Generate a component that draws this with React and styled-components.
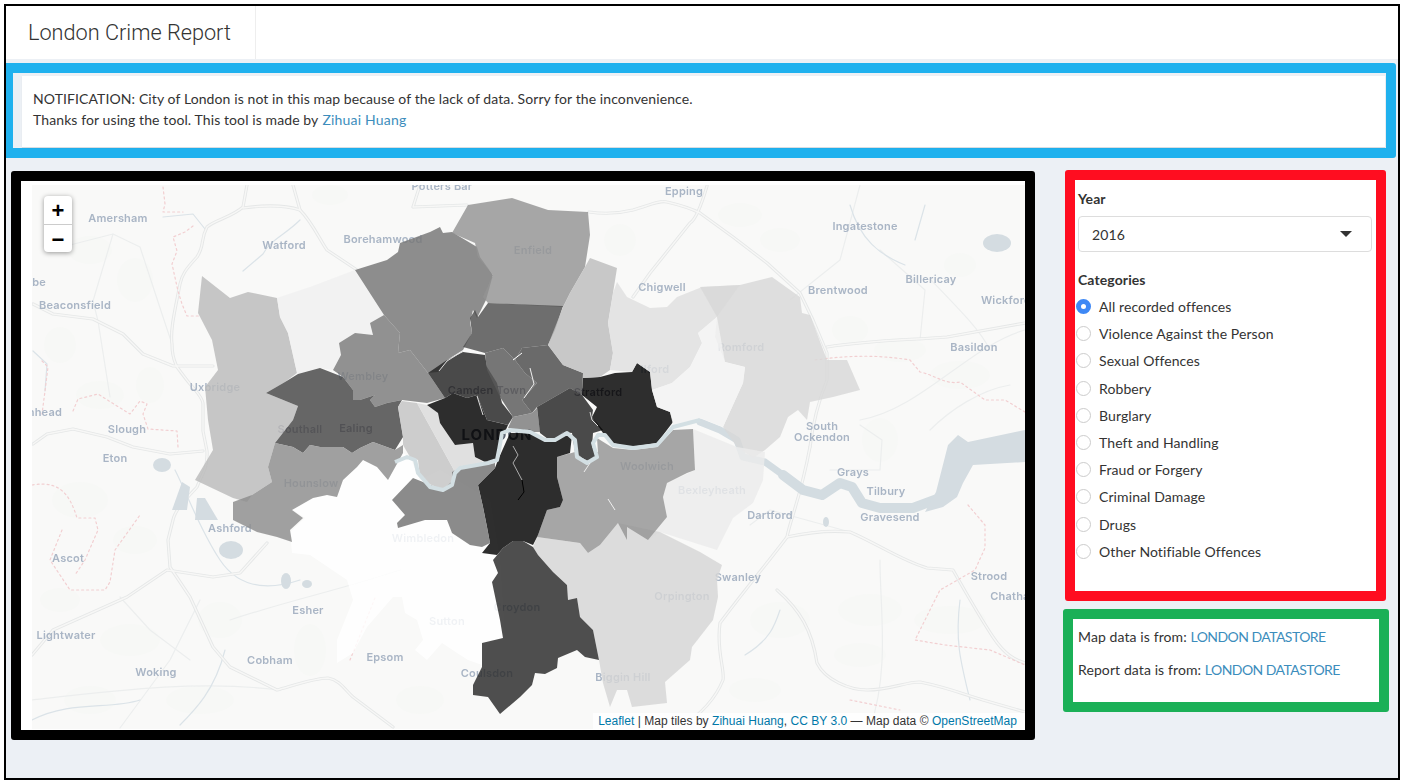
import styled, { createGlobalStyle } from "styled-components";

const GlobalStyle = createGlobalStyle`
  html, body {
    margin: 0;
    background: #fff;
  }
  * {
    box-sizing: border-box;
  }
  a {
    color: #3c8dbc;
    text-decoration: none;
  }
`;

const Frame = styled.div`
  margin: 4px;
  height: 776px;
  border: 2px solid #000;
  background: #ecf0f5;
  font-family: "Lato", "Noto Sans", sans-serif;
  font-size: 14px;
  letter-spacing: 0.1px;
  color: #333;
  overflow: hidden;
`;

const Header = styled.header`
  height: 53px;
  background: #fff;
  display: flex;
`;

const Title = styled.div`
  width: 250px;
  padding-left: 22px;
  border-right: 1px solid #eee;
  font-family: "Roboto", "Liberation Sans", sans-serif;
  font-weight: 300;
  font-size: 21.7px;
  letter-spacing: 0;
  line-height: 54px;
`;

const Highlight = styled.section`
  border: 10px solid ${(p) => p.$color};
  border-radius: 3px;
`;

const NoticeBox = styled(Highlight)`
  width: 1393px;
  height: 95px;
  margin: 4px 0 0 -3px;
  padding: 3px 1px 1px 9px;
`;

const NoticeBody = styled.div`
  height: 100%;
  background: #fff;
  padding: 12px 11px;
  line-height: 21px;
  box-shadow: 0 1px 1px rgba(0, 0, 0, 0.08);
`;

const NoticeLink = styled.a`
  letter-spacing: 0.2px;
  margin-left: 4px;
`;

const Content = styled.div`
  display: flex;
  margin: 13px 0 0 5px;
  align-items: flex-start;
`;

const MapCard = styled(Highlight)`
  width: 1024px;
  height: 569px;
  padding: 4px 0 0 11px;
  background: #fff;
`;

const MapPane = styled.div`
  position: relative;
  width: 993px;
  height: 544px;
  overflow: hidden;
  background: #f9f9f8;
`;

const MapSvg = styled.svg`
  display: block;
  filter: blur(0.35px);
`;

const ZoomControl = styled.div`
  position: absolute;
  top: 11px;
  left: 12px;
  width: 28px;
  background: #fff;
  border-radius: 4px;
  box-shadow: 0 1px 5px rgba(0, 0, 0, 0.4);
`;

const ZoomButton = styled.div`
  height: 28px;
  padding-top: 2px;
  display: flex;
  align-items: center;
  justify-content: center;
  font-family: "Liberation Sans", sans-serif;
  font-size: 22px;
  font-weight: 700;
  color: #000;
  & + & {
    border-top: 1px solid #ccc;
  }
`;

const Attribution = styled.div`
  position: absolute;
  right: 0;
  bottom: 0;
  height: 16px;
  padding: 0 8px 0 5px;
  background: rgba(255, 255, 255, 0.85);
  font-family: "Liberation Sans", sans-serif;
  font-size: 12px;
  letter-spacing: 0.03px;
  line-height: 16px;
  white-space: nowrap;
  a {
    color: #0078a8;
  }
`;

const Side = styled.aside`
  margin: -1px 0 0 30px;
  width: 321px;
`;

const ControlsBox = styled(Highlight)`
  height: 431px;
  background: #fff;
  padding: 9px 3px;
`;

const FieldLabel = styled.div`
  font-weight: 700;
  font-size: 14px;
  line-height: 20px;
  margin-bottom: 7px;
`;

const Select = styled.div`
  width: 294px;
  height: 36px;
  display: flex;
  align-items: center;
  justify-content: space-between;
  padding: 0 19px 0 13px;
  margin-bottom: 18px;
  border: 1.5px solid #ddd;
  border-radius: 4px;
  &::after {
    content: "";
    border-left: 6px solid transparent;
    border-right: 6px solid transparent;
    border-top: 6px solid #333;
  }
`;

const RadioList = styled.div`
  display: flex;
  flex-direction: column;
  margin-top: -4px;
`;

const RadioRow = styled.div`
  height: 27.2px;
  display: flex;
  align-items: center;
  gap: 8px;
`;

const RadioDot = styled.span`
  width: 15px;
  height: 15px;
  margin-left: -2px;
  border-radius: 50%;
  border: ${(p) => (p.$on ? "5px solid #3e88f5" : "1px solid #ccc")};
  background: #fff;
`;

const SourcesBox = styled(Highlight)`
  height: 103px;
  width: 326px;
  margin: 8px 0 0 -2px;
  background: #fff;
  padding: 8px 5px;
`;

const SourceLine = styled.p`
  margin: 0 0 13px;
  line-height: 20px;
`;

const SourceLink = styled.a`
  letter-spacing: -0.55px;
`;

const TileLabel = styled.text`
  font-family: "Inter", "Liberation Sans", sans-serif;
  font-size: ${(p) => p.$size || 11}px;
  font-weight: ${(p) => p.$weight || 600};
  fill: ${(p) => p.$color || "#a9b5c5"};
  text-anchor: ${(p) => p.$anchor || "middle"};
  letter-spacing: ${(p) => p.$spacing || 0.2}px;
`;

const categories = [
  "All recorded offences",
  "Violence Against the Person",
  "Sexual Offences",
  "Robbery",
  "Burglary",
  "Theft and Handling",
  "Fraud or Forgery",
  "Criminal Damage",
  "Drugs",
  "Other Notifiable Offences",
];

// the overlay lets the tiles show through, so work back from the grey seen on screen
const overlayOpacity = 0.82;
const shade = (grey) => {
  const v = Math.max(0, Math.min(255, Math.round((grey - 45) / overlayOpacity)));
  return `rgb(${v},${v},${v})`;
};

const boroughs = [
  { grey: 255, points: "290,508 305,518 290,532 292,553 310,555 347,580 353,600 337,640 337,663 353,653 367,627 393,597 402,597 405,613 417,620 423,640 415,650 427,660 442,643 457,653 468,660 482,665 490,640 505,640 500,560 490,500 440,470 420,480 410,457 403,453 388,480 377,467 363,460 357,467 343,480 337,497 327,495 313,498" },
  { grey: 198, points: "202,276 230,298 248,292 277,298 280,317 288,333 297,373 285,382 266,393 298,406 293,420 275,443 268,467 272,482 252,495 247,502 233,498 195,480 213,450 208,420 205,387 218,370 212,340 198,313" },
  { grey: 242, points: "277,298 310,287 355,270 384,315 370,323 373,335 355,333 339,343 341,355 333,370 320,368 300,375 297,373 288,333 280,317" },
  { grey: 141, points: "355,270 387,260 398,252 400,243 430,232 440,227 443,233 452,232 477,247 480,257 493,275 486,300 477,318 473,310 470,322 472,333 463,350 447,360 438,372 428,373 410,350 398,353 400,333 384,315" },
  { grey: 145, points: "339,343 355,333 373,335 370,323 384,315 400,333 398,353 410,350 428,373 445,398 427,403 402,400 387,403 375,407 370,400 375,395 360,400 353,400 353,390 343,377 333,370 341,355" },
  { grey: 102, points: "266,393 285,382 298,374 320,368 343,377 353,390 353,400 360,400 375,395 370,400 375,407 387,403 402,400 398,407 403,437 395,450 373,442 360,448 352,453 343,447 320,447 310,445 303,453 293,447 275,443 293,420 298,406" },
  { grey: 160, points: "275,443 293,447 303,453 310,445 320,447 343,447 352,453 360,448 373,442 395,450 403,445 403,453 388,480 377,467 363,460 357,467 343,480 337,497 327,495 313,498 292,510 303,518 290,530 292,542 277,537 257,532 233,520 233,502 252,495 272,482 268,467" },
  { grey: 205, points: "398,407 402,401 417,403 455,472 453,480 443,490 427,483 420,477 418,460 410,457 403,445 403,437" },
  { grey: 224, points: "417,403 427,405 438,413 440,423 455,445 473,443 475,457 485,463 455,472" },
  { grey: 42, points: "427,405 445,398 453,393 467,398 477,395 487,420 508,425 500,443 497,460 487,463 475,457 473,443 455,445 440,423 438,413" },
  { grey: 74, points: "428,373 447,360 463,352 485,355 487,367 497,383 502,403 513,417 508,425 500,423 487,420 477,395 467,398 453,393 445,398" },
  { grey: 166, points: "452,233 468,205 512,198 548,210 588,212 590,235 585,267 570,293 563,307 488,303 483,297 493,275 478,257 475,243" },
  { grey: 110, points: "488,303 563,306 555,330 548,345 522,348 515,360 503,348 485,353 463,347 472,333 470,318 475,310 478,317" },
  { grey: 118, points: "485,353 503,348 515,360 525,373 537,383 522,400 532,413 513,417 500,397 487,370" },
  { grey: 106, points: "515,360 522,348 548,345 563,365 583,373 582,395 570,388 537,407 532,413 522,400 537,383 525,373" },
  { grey: 146, points: "513,417 532,413 537,408 540,432 523,432 508,428" },
  { grey: 74, points: "537,407 570,388 582,395 593,410 592,417 603,430 593,433 592,447 598,453 590,462 582,458 575,452 572,433 563,432 552,442 540,433" },
  { grey: 46, points: "583,378 600,377 615,373 632,372 637,363 650,372 652,390 657,407 670,412 673,422 657,443 630,447 613,443 603,433 592,417 597,407 582,395" },
  { grey: 200, points: "590,258 617,268 613,293 608,323 613,353 610,370 600,377 583,378 583,373 563,365 548,345 563,307 570,293 585,267" },
  { grey: 228, points: "617,282 627,297 650,308 667,307 677,297 702,287 740,285 717,317 698,333 702,343 690,367 672,383 652,390 650,372 637,363 632,372 610,370 613,353 608,323 613,293" },
  { grey: 222, points: "700,287 740,285 772,277 800,297 802,313 810,315 827,360 847,360 860,390 833,397 810,402 807,420 798,410 788,417 780,437 765,450 753,458 737,447 723,427 743,383 745,367 725,362 715,337 717,317" },
  { grey: 244, points: "717,317 725,362 745,367 743,383 723,427 700,418 673,425 670,412 657,407 652,390 672,383 690,367 702,343 698,333" },
  { grey: 238, points: "693,429 737,447 765,452 763,480 753,503 733,518 727,530 717,550 660,532 648,540 667,517 663,497 667,483 695,470" },
  { grey: 220, points: "533,547 537,537 580,543 588,553 600,545 618,523 660,532 700,552 722,565 717,580 718,597 713,620 692,647 690,660 665,682 667,703 632,707 627,690 617,690 610,707 603,683 599,660 593,630 580,617 577,598 568,600 567,585 553,572 538,555" },
  { grey: 166, points: "597,438 613,448 633,450 657,447 673,430 693,429 695,470 687,473 667,483 663,497 667,517 648,540 627,527 627,540 618,523 600,545 588,553 580,543 537,537 538,535 547,510 560,507 563,500 557,477 557,457 575,452 582,458 590,462 598,453" },
  { grey: 44, points: "510,433 532,433 540,438 552,442 563,432 572,435 570,453 557,457 557,477 563,500 560,507 547,510 538,535 533,545 523,541 513,541 503,548 497,555 482,553 490,543 487,527 483,507 478,485 495,468 498,460" },
  { grey: 138, points: "452,472 460,468 495,463 495,468 478,485 483,507 487,527 490,543 482,547 470,545 452,533 447,520 425,520 398,528 397,523 405,515 392,500 413,478 443,490 453,480" },
  { grey: 78, points: "513,541 523,541 533,547 538,555 553,572 567,585 568,600 577,598 580,617 593,630 599,660 585,657 577,650 558,658 557,668 545,674 535,673 532,685 520,697 500,714 488,697 473,695 473,685 482,667 482,643 503,638 500,620 492,582 498,573 493,560 503,548" },
];

const roads = [
  "M247 185 L243 207 C232 217 215 220 207 227 C200 240 205 245 197 257 C185 270 182 275 180 284 C175 310 170 330 172 344 C172 358 175 362 177 367 C183 375 185 378 190 384 C200 395 203 400 203 404 L203 431 L207 451 C208 470 200 478 197 487 C185 500 175 510 173 520 L168 540 L170 567 L190 597 L213 647 L230 667 L277 690 C295 685 315 678 328 678 C340 680 345 690 353 697 L393 727",
  "M243 208 C265 205 285 205 300 210 C312 222 320 240 327 250 L357 270",
  "M293 185 L300 210",
  "M413 207 L467 205 M420 185 L413 207",
  "M589 212 C610 215 625 212 633 210 C650 205 660 200 667 202 C680 205 690 208 700 213 L733 237 L767 263 L800 293 L813 320 L827 353 L827 380 C815 410 812 430 810 447",
  "M810 447 C800 500 790 520 787 537 C770 560 750 583 720 623 C716 650 725 670 723 680 C715 700 700 715 680 728",
  "M33 304 L53 314 L93 319 L123 334 L143 354 L173 366 L213 366",
  "M33 444 L47 434 L73 429 L107 437 L133 447 L170 454 L203 451",
  "M32 655 L53 630 L127 597 L167 570 L213 577 L240 573 L267 543",
  "M787 537 C810 532 830 530 850 532 C880 545 900 560 927 568 L953 570 C970 600 985 625 993 637 C1005 655 1015 660 1025 663",
  "M777 590 C800 610 812 630 817 663 C825 680 850 690 867 690 C890 690 905 682 920 682 C950 688 965 695 983 700 L1025 712",
  "M827 347 C870 340 910 340 947 337 L1025 323",
  "M707 186 C700 210 695 220 690 223 L650 273 L633 297",
];

const minorRoads = [
  "M113 234 L93 301 L98 321 L110 397",
  "M70 245 L113 234 L140 247 L163 317 L172 344",
  "M230 620 C290 600 340 590 400 570",
  "M860 185 L840 260 L790 300",
  "M930 279 C960 310 980 330 990 350",
  "M32 700 C120 690 200 680 280 690",
  "M860 420 C920 410 970 345 1025 330",
  "M200 600 L170 660 L120 728",
  "M870 728 C890 670 880 610 880 560",
  "M930 430 C950 410 980 390 1010 385",
  "M750 525 L770 510 L850 532",
  "M120 597 L150 630 L190 660",
  "M830 470 L880 470 L882 440 L860 425",
  "M920 340 L925 290 L880 250",
];

const streams = [
  "M850 205 C860 240 880 255 905 265",
  "M915 240 L925 205",
  "M163 217 L193 214 L205 229",
  "M243 271 L263 254 C270 240 285 235 300 220",
  "M33 351 L47 364 L45 391",
  "M32 720 C70 700 110 710 140 700",
  "M175 470 C190 500 200 530 220 560 C240 590 270 590 300 580",
  "M960 600 C955 640 960 660 970 700",
  "M780 610 C775 625 770 640 745 655",
  "M225 650 C215 690 195 710 180 725",
];

const boundaries = [
  "M163 187 L165 204 L163 212 L183 212 M193 226 L185 232 L173 237 L177 251 L172 264 L178 291 L182 304 L187 316 L200 316",
  "M42 361 L48 367 L45 391 L42 414",
  "M73 411 L78 399 L98 394 L117 406 L130 414 L140 401 L147 404 L143 414 L148 429 L177 431 L178 447",
  "M32 485 C60 480 70 495 77 518 L95 518 L98 530 L85 560 L75 575 M62 530 L50 560 L70 590 L105 590 L110 582 L115 550 L140 515",
  "M815 360 C850 355 880 355 910 360 L920 372 C935 375 945 385 960 382 L985 400 L1005 400 L1025 412",
  "M968 505 L985 525 L985 548 L975 570 L940 590 L915 640 L945 645 L990 650 L1025 665",
  "M375 598 L350 660",
  "M850 700 L900 710",
];

const lakes = [
  { cx: 231, cy: 550, rx: 12, ry: 9 },
  { cx: 162, cy: 465, rx: 9, ry: 7 },
  { cx: 307, cy: 584, rx: 5, ry: 4 },
  { cx: 286, cy: 581, rx: 5, ry: 8 },
  { cx: 997, cy: 243, rx: 14, ry: 9 },
  { cx: 826, cy: 522, rx: 3, ry: 5 },
];

const blotches = [
  [90, 250, 22, 14], [135, 280, 18, 22], [60, 345, 16, 18], [100, 395, 24, 14], [150, 385, 14, 18],
  [80, 500, 28, 18], [135, 540, 22, 14], [60, 600, 20, 12], [130, 640, 30, 16], [220, 620, 22, 18],
  [90, 700, 26, 14], [200, 700, 34, 14], [310, 650, 16, 26], [420, 700, 24, 14], [780, 620, 30, 18],
  [870, 610, 32, 16], [950, 620, 36, 14], [900, 350, 26, 12], [960, 375, 30, 14], [880, 440, 18, 22],
  [780, 240, 20, 12], [850, 330, 18, 14], [960, 265, 16, 12], [740, 215, 22, 12], [620, 240, 16, 16],
  [330, 195, 18, 10], [860, 655, 26, 12], [755, 690, 26, 12],
];

const labels = [
  { x: 442, y: 190, text: "Potters Bar" },
  { x: 684, y: 195, text: "Epping" },
  { x: 118, y: 222, text: "Amersham" },
  { x: 284, y: 249, text: "Watford" },
  { x: 383, y: 243, text: "Borehamwood" },
  { x: 533, y: 254, text: "Enfield" },
  { x: 865, y: 230, text: "Ingatestone" },
  { x: 662, y: 291, text: "Chigwell" },
  { x: 838, y: 294, text: "Brentwood" },
  { x: 931, y: 283, text: "Billericay" },
  { x: 1006, y: 304, text: "Wickford" },
  { x: 75, y: 309, text: "Beaconsfield" },
  { x: 46, y: 286, text: "Wycombe", anchor: "end" },
  { x: 62, y: 416, text: "Maidenhead", anchor: "end" },
  { x: 741, y: 351, text: "Romford" },
  { x: 974, y: 351, text: "Basildon" },
  { x: 215, y: 391, text: "Uxbridge" },
  { x: 363, y: 380, text: "Wembley" },
  { x: 487, y: 394, text: "Camden Town", color: "#778" },
  { x: 598, y: 396, text: "Stratford", color: "#778" },
  { x: 655, y: 373, text: "Ilford" },
  { x: 300, y: 433, text: "Southall", color: "#99a" },
  { x: 356, y: 432, text: "Ealing", color: "#889" },
  { x: 127, y: 433, text: "Slough" },
  { x: 115, y: 462, text: "Eton" },
  { x: 311, y: 487, text: "Hounslow" },
  { x: 647, y: 470, text: "Woolwich" },
  { x: 712, y: 494, text: "Bexleyheath" },
  { x: 853, y: 476, text: "Grays" },
  { x: 886, y: 495, text: "Tilbury" },
  { x: 890, y: 521, text: "Gravesend" },
  { x: 770, y: 519, text: "Dartford" },
  { x: 230, y: 532, text: "Ashford" },
  { x: 68, y: 562, text: "Ascot" },
  { x: 423, y: 542, text: "Wimbledon" },
  { x: 517, y: 611, text: "Croydon" },
  { x: 682, y: 600, text: "Orpington" },
  { x: 738, y: 581, text: "Swanley" },
  { x: 308, y: 614, text: "Esher" },
  { x: 447, y: 625, text: "Sutton" },
  { x: 66, y: 639, text: "Lightwater" },
  { x: 270, y: 664, text: "Cobham" },
  { x: 385, y: 661, text: "Epsom" },
  { x: 156, y: 676, text: "Woking" },
  { x: 487, y: 677, text: "Coulsdon" },
  { x: 623, y: 681, text: "Biggin Hill" },
  { x: 989, y: 580, text: "Strood" },
  { x: 1015, y: 600, text: "Chatham" },
];

const thamesEast = [
  { d: "M700 422 L720 430 L737 440 L743 457 L765 462 L783 475", width: 7 },
  { d: "M783 475 L803 490 L822 495 L840 483 L852 487 L862 503 L880 508 L913 508 L940 498", width: 10 },
];

const thamesCity =
  "M700 420 L673 427 L657 445 L633 448 L613 445 L605 435 L598 435 L593 443 L597 457 L587 463 L577 457 L575 440 L567 433 L555 440 L545 440 L530 432 L510 430 L502 433 L499 450 L497 460 L488 463 L460 468 L455 473 L452 485 L443 490 L430 487 L418 473 L415 460 L407 457 L395 462";

// thin unfilled seams between the overlay polygons
const seams = [
  { d: "M513 360 L522 353", color: "#fff" },
  { d: "M530 368 L534 384 L524 398", color: "#eee" },
  { d: "M477 396 L483 415", color: "#ddd" },
  { d: "M463 351 L447 361 L439 371", color: "#ddd" },
  { d: "M590 412 L592 420 L598 426", color: "#ddd" },
  { d: "M513 446 L518 455 L513 463 L522 480", color: "#aaa" },
  { d: "M522 480 L524 492 L518 500", color: "#000" },
  { d: "M590 463 L584 472", color: "#eee" },
  { d: "M608 499 L615 510", color: "#eee" },
];

const CrimeMap = () => (
  <MapSvg width="993" height="544" viewBox="32 185 993 544">
    <g fill="#f7f8f6">
      {blotches.map(([cx, cy, rx, ry]) => (
        <ellipse key={`${cx}-${cy}`} cx={cx} cy={cy} rx={rx} ry={ry} />
      ))}
    </g>
    <g fill="none" strokeLinecap="round" strokeLinejoin="round">
      {minorRoads.map((d) => (
        <path key={d} d={d} stroke="#eceeee" strokeWidth="1.2" />
      ))}
      {streams.map((d) => (
        <path key={d} d={d} stroke="#dbe3e8" strokeWidth="1.2" />
      ))}
      {roads.map((d) => (
        <path key={d} d={d} stroke="#e5e7e7" strokeWidth="3.2" />
      ))}
      {roads.map((d) => (
        <path key={d + "in"} d={d} stroke="#f7f7f6" strokeWidth="1.4" />
      ))}
      {boundaries.map((d) => (
        <path key={d} d={d} stroke="#f2cfd1" strokeWidth="1.2" strokeDasharray="2 3" />
      ))}
      {thamesEast.map((t) => (
        <path key={t.d} d={t.d} stroke="#d3dce1" strokeWidth={t.width} />
      ))}
    </g>
    <g fill="#d4dce1">
      <polygon points="948,445 958,435 968,442 1025,430 1025,462 973,465 963,483 957,497 943,507 925,512 936,492" />
      <polygon points="182,482 190,487 187,510 172,510" />
      <polygon points="197,498 205,498 218,520 195,520" />
      {lakes.map((l) => (
        <ellipse key={l.cx} cx={l.cx} cy={l.cy} rx={l.rx} ry={l.ry} />
      ))}
    </g>
    {labels.map((l) => (
      <TileLabel key={l.text} x={l.x} y={l.y} $anchor={l.anchor} $color={l.color}>
        {l.text}
      </TileLabel>
    ))}
    <TileLabel x={822} y={430}>
      South
      <tspan x={822} dy={11}>Ockendon</tspan>
    </TileLabel>
    <TileLabel x={497} y={440} $size={15} $weight={700} $spacing={1} $color="#5a6270">
      LONDON
    </TileLabel>
    <g fillOpacity={overlayOpacity}>
      {boroughs.map((b) => (
        <polygon key={b.points} points={b.points} fill={shade(b.grey)} />
      ))}
    </g>
    <g fill="none" strokeLinejoin="round">
      <path d={thamesCity} stroke="#d3dfe3" strokeWidth="4" />
      {seams.map((s) => (
        <path key={s.d} d={s.d} stroke={s.color} strokeWidth="1" />
      ))}
    </g>
  </MapSvg>
);

const App = () => (
  <>
    <GlobalStyle />
    <Frame>
      <Header>
        <Title>London Crime Report</Title>
      </Header>
      <NoticeBox $color="#1fb1ee">
        <NoticeBody>
          NOTIFICATION: City of London is not in this map because of the lack of data. Sorry for the inconvenience.
          <br />
          Thanks for using the tool. This tool is made by<NoticeLink href="#">Zihuai Huang</NoticeLink>
        </NoticeBody>
      </NoticeBox>
      <Content>
        <MapCard $color="#000">
          <MapPane>
            <CrimeMap />
            <ZoomControl>
              <ZoomButton>+</ZoomButton>
              <ZoomButton>−</ZoomButton>
            </ZoomControl>
            <Attribution>
              <a href="#">Leaflet</a> | Map tiles by <a href="#">Zihuai Huang</a>, <a href="#">CC BY 3.0</a> — Map data © <a href="#">OpenStreetMap</a>
            </Attribution>
          </MapPane>
        </MapCard>
        <Side>
          <ControlsBox $color="#ff0d20">
            <FieldLabel>Year</FieldLabel>
            <Select>2016</Select>
            <FieldLabel>Categories</FieldLabel>
            <RadioList>
              {categories.map((c, i) => (
                <RadioRow key={c}>
                  <RadioDot $on={i === 0} />
                  {c}
                </RadioRow>
              ))}
            </RadioList>
          </ControlsBox>
          <SourcesBox $color="#1bb057">
            <SourceLine>
              Map data is from: <SourceLink href="#">LONDON DATASTORE</SourceLink>
            </SourceLine>
            <SourceLine>
              Report data is from: <SourceLink href="#">LONDON DATASTORE</SourceLink>
            </SourceLine>
          </SourcesBox>
        </Side>
      </Content>
    </Frame>
  </>
);

export default App;
